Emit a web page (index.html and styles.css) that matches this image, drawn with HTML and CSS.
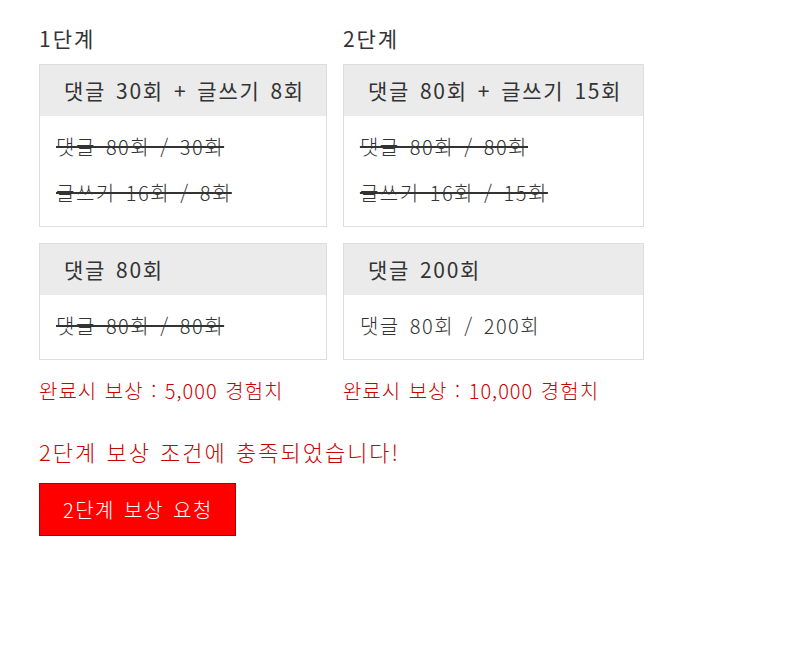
FILE: index.html
```html
<!DOCTYPE html>
<html lang="ko">
<head>
  <meta charset="UTF-8" />
  <meta name="viewport" content="width=device-width, initial-scale=1.0"/>
  <title>단계별 보상</title>
  <link rel="stylesheet" href="styles.css">
</head>
<body>
  <div class="reward-page">
    <div class="stages">
      <!-- 1단계 -->
      <div class="stage">
        <h3 class="stage-title">1단계</h3>
        <div class="mission">
          <div class="mission-head">댓글 30회 + 글쓰기 8회</div>
          <div class="mission-body">
            <p class="done">댓글 80회 / 30회</p>
            <p class="done">글쓰기 16회 / 8회</p>
          </div>
        </div>
        <div class="mission">
          <div class="mission-head">댓글 80회</div>
          <div class="mission-body">
            <p class="done">댓글 80회 / 80회</p>
          </div>
        </div>
        <p class="reward">완료시 보상 : 5,000 경험치</p>
      </div>

      <!-- 2단계 -->
      <div class="stage">
        <h3 class="stage-title">2단계</h3>
        <div class="mission">
          <div class="mission-head">댓글 80회 + 글쓰기 15회</div>
          <div class="mission-body">
            <p class="done">댓글 80회 / 80회</p>
            <p class="done">글쓰기 16회 / 15회</p>
          </div>
        </div>
        <div class="mission">
          <div class="mission-head">댓글 200회</div>
          <div class="mission-body">
            <p>댓글 80회 / 200회</p>
          </div>
        </div>
        <p class="reward">완료시 보상 : 10,000 경험치</p>
      </div>
    </div>

    <p class="notice">2단계 보상 조건에 충족되었습니다!</p>
    <button class="request-btn" id="requestBtn">2단계 보상 요청</button>
  </div>
</body>
</html>
```

FILE: styles.css
```css
body {
  margin: 0;
  font-family: 'Noto Sans CJK KR', 'Noto Sans', sans-serif;
  color: #333;
  background: #fff;
}

.reward-page {
  padding: 26px 39px;
}

.stages {
  display: flex;
  align-items: flex-start;
  gap: 16px;
}

.stage {
  display: flex;
  flex-direction: column;
  align-items: stretch;
}

.stage-title {
  margin: 0 0 14px;
  font-size: 21px;
  font-weight: normal;
  line-height: 24px;
  letter-spacing: 2px;
}

.mission {
  border: 1px solid #ddd;
  margin-bottom: 16px;
}

.mission-head {
  background-color: #ebebeb;
  padding: 0 21px 0 24px;
  font-size: 21px;
  line-height: 51px;
  letter-spacing: 1.7px;
  word-spacing: 2.5px;
  white-space: nowrap;
}

.mission-body {
  padding: 8px 16px 10px;
}

.mission-body p {
  margin: 0;
  font-size: 20px;
  font-weight: 300;
  line-height: 46px;
  letter-spacing: 1.5px;
  word-spacing: 3px;
  white-space: nowrap;
}

.mission-body .done {
  text-decoration: line-through;
  text-decoration-thickness: 2px;
}

.reward {
  margin: 3px 0 0;
  font-size: 20px;
  line-height: 24px;
  font-weight: 300;
  letter-spacing: 1px;
  word-spacing: 1px;
  color: #cc0000;
  white-space: nowrap;
}

.notice {
  margin: 35px 0 19px;
  font-size: 22px;
  line-height: 26px;
  font-weight: 300;
  letter-spacing: 2px;
  word-spacing: 1px;
  color: #cc0000;
}

.request-btn {
  height: 53px;
  padding: 0 22px 0 23px;
  background-color: #ff0000;
  border: 1px solid #aa0000;
  color: #fff;
  font-family: inherit;
  font-size: 20px;
  font-weight: 300;
  letter-spacing: 1.5px;
  word-spacing: 2px;
  cursor: pointer;
}
```
